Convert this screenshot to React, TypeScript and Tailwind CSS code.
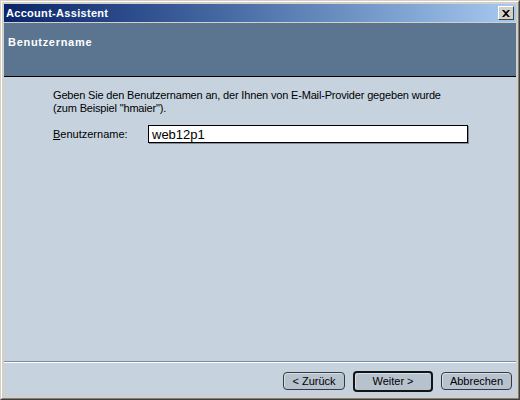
import React from "react";

const font = { fontFamily: '"Liberation Sans", Arial, sans-serif' };

function Btn({ children, def, w }: { children: React.ReactNode; def?: boolean; w: string }) {
  return (
    <div
      className={`${w} ${def ? "h-[21px] border-2 border-[#141414]" : "h-[18px] border border-[#3a3a3a]"} rounded-[4px] bg-[#b7c2cf] flex items-center justify-center text-[11px] leading-none text-black shadow-[inset_1px_1px_0_#d6dee7]`}
    >
      {children}
    </div>
  );
}

export default function App() {
  return (
    <div className="w-[520px] h-[400px] border-t border-l border-t-[#d4d0c8] border-l-[#d4d0c8] border-r border-b border-r-[#404040] border-b-[#404040]" style={font}>
      <div className="w-full h-full border-t border-l border-t-white border-l-white border-r border-b border-r-[#808080] border-b-[#808080] bg-[#d4d0c8] p-[2px] flex flex-col">
        {/* Title bar */}
        <div className="h-[18px] flex items-center justify-between bg-gradient-to-r from-[#0a246a] to-[#a6caf0] shrink-0">
          <span className="pl-[2px] text-[11px] font-bold text-white leading-none tracking-[0.3px]">Account-Assistent</span>
          <div className="mr-[2px] w-[16px] h-[14px] bg-[#d4d0c8] border-t border-l border-t-white border-l-white border-r border-b border-r-[#404040] border-b-[#404040] flex items-center justify-center">
            <svg width="8" height="7" viewBox="0 0 8 7">
              <path d="M0 0h2l2 2 2-2h2L5 3.5 8 7H6L4 5 2 7H0l3-3.5z" fill="#000" />
            </svg>
          </div>
        </div>
        <div className="h-[1px] shrink-0" />
        {/* Header */}
        <div className="h-[54px] shrink-0 bg-[#5b7591] border-b border-black pl-[4px] pt-[13px] text-[11px] leading-[13px]">
          <span className="font-bold text-white tracking-[0.7px]">Benutzername</span>
        </div>
        {/* Body */}
        <div className="flex-1 bg-[#c6d3df] flex flex-col">
          <div className="flex-1 pl-[49px] pt-[12px]">
            <p className="text-[11px] leading-[13px] text-black tracking-[-0.17px]">
              Geben Sie den Benutzernamen an, der Ihnen von E-Mail-Provider gegeben wurde
              <br />
              (zum Beispiel "hmaier").
            </p>
            <div className="mt-[10px] flex items-center">
              <span className="w-[95px] text-[11px] leading-[13px] text-black">
                <span className="underline">B</span>enutzername:
              </span>
              <div className="w-[320px] h-[18px] border border-black bg-white flex items-center pl-[3px] shadow-[1px_1px_0_#7f8b98]">
                <span className="text-[13px] leading-none text-black">web12p1</span>
              </div>
            </div>
          </div>
          <div className="h-[2px] border-t border-t-[#7d8996] border-b border-b-white shrink-0" />
          <div className="h-[33px] shrink-0 flex items-start justify-end gap-[8px] pr-[4px] pt-[8px]">
            <div className="pt-[1px]">
              <Btn w="w-[62px]">&lt; Zurück</Btn>
            </div>
            <Btn w="w-[80px]" def>
              Weiter &gt;
            </Btn>
            <div className="pt-[1px]">
              <Btn w="w-[71px]">Abbrechen</Btn>
            </div>
          </div>
        </div>
      </div>
    </div>
  );
}
